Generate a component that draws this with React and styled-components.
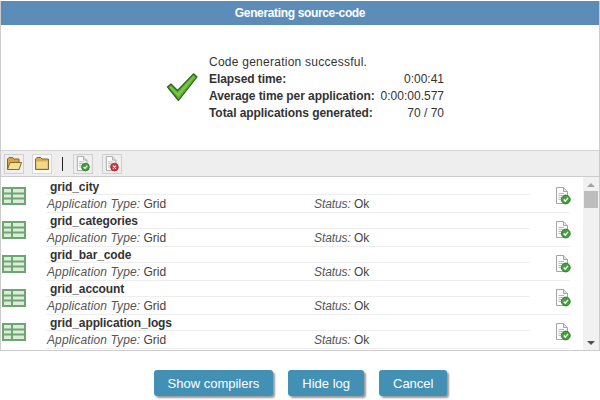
import React from "react";
import styled, { createGlobalStyle } from "styled-components";

const Global = createGlobalStyle`
  html, body { margin: 0; padding: 0; background: #fff; }
  body { width: 600px; height: 400px; overflow: hidden; font-family: "Liberation Sans", Arial, sans-serif; font-size: 12px; color: #333; }
`;

const Page = styled.div`
  width: 600px; height: 400px; box-sizing: border-box; padding-top: 1px;
  display: flex; flex-direction: column; background: #fff;
`;
const Panel = styled.div`
  height: 350px; box-sizing: border-box; border-left: 1px solid #ccc; border-right: 1px solid #ccc; border-bottom: 1px solid #ccc;
  display: flex; flex-direction: column;
`;
const Header = styled.div`
  height: 24px; background: #5b8db8; color: #fff; font-weight: bold; font-size: 12px; letter-spacing: -0.35px;
  display: flex; align-items: center; justify-content: center; flex: none;
`;
const Summary = styled.div`
  height: 125px; flex: none; display: flex; align-items: flex-start; padding: 29px 0 0 165px; box-sizing: border-box; gap: 11px;
`;
const BigCheck = styled.svg`
  width: 32px; height: 30px; margin-top: 19px; flex: none;
`;
const Stats = styled.div`
  display: grid; grid-template-columns: 165px 70px; line-height: 17px; color: #333; font-size: 12px;
`;
const Message = styled.div` grid-column: 1 / span 2; letter-spacing: 0.25px; `;
const Label = styled.div` font-weight: bold; white-space: nowrap; letter-spacing: -0.07px; `;
const Value = styled.div` text-align: right; `;
const Toolbar = styled.div`
  height: 27px; flex: none; box-sizing: border-box; background: #eeeeee; border-top: 1px solid #d4d4d4; border-bottom: 1px solid #ccc;
  display: flex; align-items: center; padding-left: 3px;
`;
const ToolButton = styled.div`
  width: 20px; height: 20px; box-sizing: border-box; border: 1px solid ${p => (p.$active ? "#d8d8d8" : "#cfcfcf")};
  background: ${p => (p.$active ? "#fafafa" : "#efefef")};
  display: flex; align-items: center; justify-content: center; margin-right: ${p => p.$gap}px;
`;
const Divider = styled.div` width: 1px; height: 14px; background: #222; margin-right: 10px; `;
const Body = styled.div` flex: 1; display: flex; min-height: 0; `;
const List = styled.div` flex: 1; min-width: 0; padding-top: 2px; overflow: hidden; `;
const Row = styled.div` height: 34px; display: flex; `;
const IconCell = styled.div` width: 45px; flex: none; padding: 8px 0 0 1px; box-sizing: border-box; `;
const Info = styled.div` width: 480px; flex: none; `;
const Name = styled.div`
  height: 15px; line-height: 16px; padding-left: 4px; font-weight: bold; font-size: 12px; color: #333; letter-spacing: -0.1px;
  border-bottom: 1px solid #eee; width: 480px; box-sizing: content-box;
`;
const Details = styled.div`
  height: 17px; line-height: 19px; border-bottom: 1px solid #eee; display: flex; color: #444; width: 524px;
`;
const Type = styled.div` width: 267px; padding-left: 1px; box-sizing: border-box; `;
const TypeLabel = styled.em` font-style: italic; color: #555; letter-spacing: 0.12px; `;
const StatusText = styled.div` padding-left: 1px; `;
const StatusLabel = styled.em` font-style: italic; color: #555; letter-spacing: -0.1px; `;
const StatusIcon = styled.div` margin-left: 29px; padding-top: 8px; `;
const Scrollbar = styled.div`
  width: 16px; flex: none; background: #f1f1f1; display: flex; flex-direction: column; align-items: center; position: relative;
`;
const Arrow = styled.div`
  width: 0; height: 0; border-left: 4px solid transparent; border-right: 4px solid transparent;
  ${p => p.$down ? "border-top: 4px solid #505050; position: absolute; bottom: 5px;" : "border-bottom: 4px solid #a3a3a3; margin-top: 6px;"}
`;
const Thumb = styled.div` width: 14px; height: 17px; background: #bdbdbd; margin-top: 4px; `;
const Footer = styled.div`
  flex: 1; display: flex; align-items: flex-start; justify-content: center; gap: 15px; padding: 19px 0 0 1px;
`;
const Button = styled.button`
  height: 26px; padding: 0 14px; border: 0; border-radius: 3px; background: #4291b5; color: #fff;
  font-family: "Liberation Sans", Arial, sans-serif; font-size: 13px; box-shadow: 2px 2px 2px #9a9a9a;
`;
const GridSvg = styled.svg` display: block; `;

const Folder = ({ open }) => (
  <svg width="16" height="15" viewBox="0 0 16 15">
    {open ? (
      <>
        <path d="M1.5 13.5 V3 L3 1.5 H6.5 L8 3 H13 V13.5Z" fill="#d3a648" stroke="#86682a" />
        <path d="M1.5 13.5 L4 6.5 H15.5 L13 13.5Z" fill="#f6df96" stroke="#86682a" />
      </>
    ) : (
      <>
        <path d="M1.5 13.5 V3 L3 1.5 H6.5 L8 3 H14.5 V13.5Z" fill="#d8ae54" stroke="#86682a" />
        <path d="M2.5 5.5 H13.5 V12.5 H2.5Z" fill="#f2d88c" />
      </>
    )}
  </svg>
);
const DocIcon = ({ err, width = 16, height = 18 }) => (
  <svg width={width} height={height} viewBox="0 0 16 18">
    <path d="M1.5 .5 H8.5 L12.5 4.5 V16.5 H1.5Z" fill="#fdfdfd" stroke="#a4a4a4" />
    <path d="M8.5 .5 V4.5 H12.5" fill="#e4e4e4" stroke="#a4a4a4" />
    <path d="M3.5 6.5H9M3.5 8.5H8M3.5 10.5H7M3.5 12.5H6" stroke="#b8b8b8" />
    <circle cx="10.8" cy="12.5" r="4.4" fill={err ? "#d0363c" : "#43a13c"} stroke={err ? "#a5282c" : "#2f7d2b"} />
    {err ? (
      <path d="M9.1 10.8 L12.5 14.2 M12.5 10.8 L9.1 14.2" stroke="#fff" strokeWidth="1.3" />
    ) : (
      <path d="M8.7 12.5 L10.3 14.1 L13 10.9" stroke="#fff" strokeWidth="1.4" fill="none" />
    )}
  </svg>
);
const GridIcon = () => (
  <GridSvg width="24" height="18" viewBox="0 0 24 18">
    <rect width="24" height="18" fill="#6fa474" />
    <path d="M2 2h7v3.5H2zM11 2h11v3.5H11zM2 7.5h7v3H2zM11 7.5h11v3H11zM2 12.5h7v3.5H2zM11 12.5h11v3.5H11z" fill="#dcecd6" />
  </GridSvg>
);

const rows = ["grid_city", "grid_categories", "grid_bar_code", "grid_account", "grid_application_logs"];

export default function App() {
  return (
    <Page>
      <Global />
      <Panel>
        <Header>Generating source-code</Header>
        <Summary>
          <BigCheck viewBox="0 0 32 30">
            <path d="M1.5 14 L5 11 L11.5 17.5 L27.5 .8 L31 4 L12.5 27.5 Z" fill="#5aaa35" stroke="#2f5f22" strokeWidth="1.2" strokeLinejoin="round" />
            <path d="M3.5 14.5 L5 13.3 L11.5 20 L27.5 3 L28.6 4 L12.5 24 Z" fill="#76c848" />
          </BigCheck>
          <Stats>
            <Message>Code generation successful.</Message>
            <Label>Elapsed time:</Label><Value>0:00:41</Value>
            <Label>Average time per application:</Label><Value>0:00:00.577</Value>
            <Label>Total applications generated:</Label><Value>70 / 70</Value>
          </Stats>
        </Summary>
        <Toolbar>
          <ToolButton $gap={8}><Folder open /></ToolButton>
          <ToolButton $active $gap={10}><Folder /></ToolButton>
          <Divider />
          <ToolButton $gap={9}><DocIcon width={14} height={16} /></ToolButton>
          <ToolButton $gap={0}><DocIcon err width={14} height={16} /></ToolButton>
        </Toolbar>
        <Body>
          <List>
            {rows.map(name => (
              <Row key={name}>
                <IconCell><GridIcon /></IconCell>
                <Info>
                  <Name>{name}</Name>
                  <Details>
                    <Type><TypeLabel>Application Type:</TypeLabel> Grid</Type>
                    <StatusText><StatusLabel>Status:</StatusLabel> Ok</StatusText>
                  </Details>
                </Info>
                <StatusIcon><DocIcon /></StatusIcon>
              </Row>
            ))}
          </List>
          <Scrollbar>
            <Arrow />
            <Thumb />
            <Arrow $down />
          </Scrollbar>
        </Body>
      </Panel>
      <Footer>
        <Button>Show compilers</Button>
        <Button>Hide log</Button>
        <Button>Cancel</Button>
      </Footer>
    </Page>
  );
}
